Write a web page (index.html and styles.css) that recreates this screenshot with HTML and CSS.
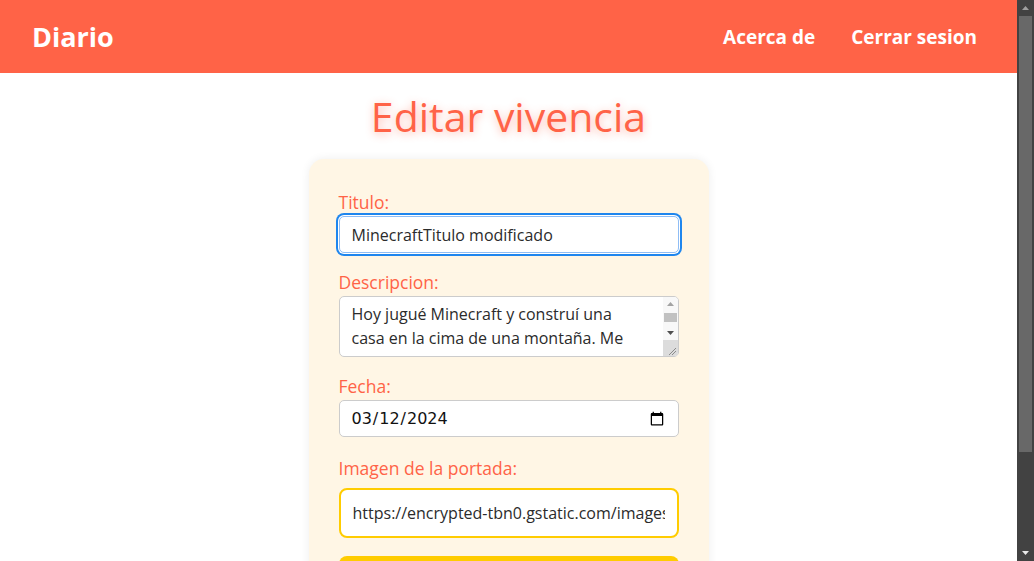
FILE: index.html
```html
<!DOCTYPE html>
<html lang="es">
<head>
<meta charset="utf-8">
<title>Editar vivencia</title>
<link rel="stylesheet" href="styles.css">
</head>
<body>
<nav class="navbar">
  <a class="brand" href="#">Diario</a>
  <div class="nav-links">
    <a class="nav-link" href="#">Acerca de</a>
    <a class="nav-link" href="#">Cerrar sesion</a>
  </div>
</nav>
<main class="page">
  <h1 class="page-title">Editar vivencia</h1>
  <form class="card">
    <div class="group">
      <label class="label" for="titulo">Titulo:</label>
      <input class="field field-focus" id="titulo" type="text" value="MinecraftTitulo modificado">
    </div>
    <div class="group">
      <label class="label" for="desc">Descripcion:</label>
      <div class="area-wrap">
        <textarea class="field area" id="desc" rows="2">Hoy jugué Minecraft y construí una casa en la cima de una montaña. Me encantó ver el atardecer desde allí y explorar las cuevas cercanas.</textarea>
        <div class="mini-scroll" aria-hidden="true">
          <div class="mini-btn"><svg width="15" height="14" viewBox="0 0 15 14"><path d="M4 9 L7.5 5 L11 9 Z" fill="#a3a3a3"/></svg></div>
          <div class="mini-track"><div class="mini-thumb"></div></div>
          <div class="mini-btn"><svg width="15" height="14" viewBox="0 0 15 14"><path d="M4 5 L11 5 L7.5 9 Z" fill="#505050"/></svg></div>
          <div class="mini-corner"><svg width="15" height="16" viewBox="0 0 15 16"><path d="M13 8 L6 15 M13 11 L9 15" stroke="#8a8a8a" stroke-width="1"/></svg></div>
        </div>
      </div>
    </div>
    <div class="group">
      <label class="label" for="fecha">Fecha:</label>
      <input class="field date" id="fecha" type="date" value="2024-03-12">
    </div>
    <div class="group">
      <label class="label" for="img">Imagen de la portada:</label>
      <input class="field url" id="img" type="text" value="https://encrypted-tbn0.gstatic.com/images?q=tbn:ANd9GcQ3minecraft">
    </div>
    <button class="submit" type="button">Guardar cambios</button>
  </form>
</main>
<div class="page-scroll" aria-hidden="true">
  <div class="ps-btn"><svg width="17" height="16" viewBox="0 0 17 16"><path d="M5 10 L8.5 6 L12 10 Z" fill="#a0a0a0"/></svg></div>
  <div class="ps-track"><div class="ps-thumb"></div></div>
  <div class="ps-btn"><svg width="17" height="16" viewBox="0 0 17 16"><path d="M5 6 L12 6 L8.5 10 Z" fill="#e8e8e8"/></svg></div>
</div>
</body>
</html>
```
FILE: styles.css
```css
html {
  background: #ffffff;
}
body {
  margin: 0 17px 0 0;
  background: #ffffff;
  font-family: "Comic Sans MS", "Open Sans", sans-serif;
  color: #333333;
}
.navbar {
  height: 73px;
  background: #ff6347;
  display: flex;
  align-items: center;
  justify-content: space-between;
  padding: 0 40px 0 32px;
}
.brand {
  color: #ffffff;
  font-weight: 700;
  font-size: 27px;
  text-decoration: none;
}
.nav-links {
  display: flex;
  gap: 36px;
}
.nav-link {
  color: #ffffff;
  font-weight: 700;
  font-size: 19px;
  text-decoration: none;
}
.page {
  display: flex;
  flex-direction: column;
  align-items: center;
  padding-bottom: 50px;
}
.page-title {
  margin: 15px 0;
  font-size: 41px;
  line-height: 56px;
  font-weight: 400;
  color: #ff6347;
  text-shadow: 0 2px 8px rgba(255, 99, 71, 0.45);
}
.card {
  width: 400px;
  box-sizing: border-box;
  background: #fff6e5;
  border-radius: 15px;
  box-shadow: 0 0 10px rgba(0, 0, 0, 0.07);
  padding: 31px 30px 30px;
  display: flex;
  flex-direction: column;
}
.group {
  display: flex;
  flex-direction: column;
  margin-bottom: 17px;
}
.label {
  color: #ff6347;
  font-size: 17.5px;
  line-height: 24px;
  margin-bottom: 2px;
}
.field {
  box-sizing: border-box;
  width: 340px;
  height: 37px;
  border: 1px solid #cccccc;
  border-radius: 5px;
  background: #ffffff;
  padding: 0 12px;
  font-family: inherit;
  font-size: 16px;
  color: #2b2b2b;
  margin: 0;
}
.field-focus {
  border-color: #8fbdf5;
  outline: none;
  box-shadow: 0 0 0 1px #ffffff, 0 0 0 3px #1f86ee;
}
.area-wrap {
  position: relative;
  width: 340px;
  height: 61px;
}
.area {
  display: block;
  height: 61px;
  padding: 5px 31px 5px 12px;
  line-height: 24px;
  resize: none;
  overflow: hidden;
}
.mini-scroll {
  position: absolute;
  top: 1px;
  right: 1px;
  bottom: 1px;
  width: 15px;
  display: flex;
  flex-direction: column;
  background: #f8f8f8;
  border-radius: 0 4px 4px 0;
  overflow: hidden;
}
.mini-btn {
  height: 14px;
  display: flex;
}
.mini-track {
  flex: 1;
  padding: 2px 1px 4px;
  display: flex;
}
.mini-thumb {
  flex: 1;
  background: #c1c1c1;
}
.mini-corner {
  height: 16px;
  background: #dcdcdc;
  display: flex;
}
.date {
  font-family: "DejaVu Sans", sans-serif;
  color: #111111;
  padding: 0 11px;
}
.url {
  height: 50px;
  margin-top: 6px;
  border: 2px solid #ffcc00;
  border-radius: 8px;
  padding: 0 12px;
}
.group:nth-child(4) {
  margin-bottom: 0;
  margin-top: 2px;
}
.submit {
  margin-top: 18px;
  height: 52px;
  border: none;
  border-radius: 8px;
  background: #ffcc00;
  color: #ffffff;
  font-family: inherit;
  font-weight: 700;
  font-size: 18px;
}
.page-scroll {
  position: fixed;
  top: 0;
  right: 0;
  bottom: 0;
  width: 17px;
  background: #424242;
  display: flex;
  flex-direction: column;
}
.ps-btn {
  height: 16px;
  display: flex;
}
.ps-track {
  flex: 1;
  padding: 0 2px 93px;
  display: flex;
}
.ps-thumb {
  flex: 1;
  background: #686868;
}
```
